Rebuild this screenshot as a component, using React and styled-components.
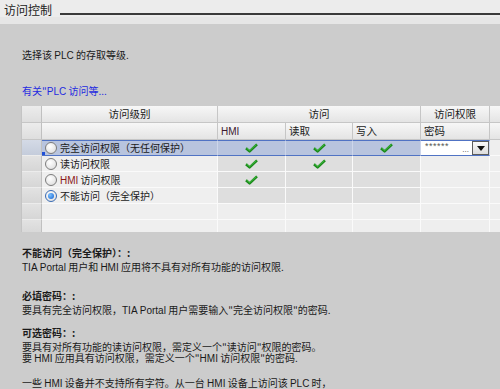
import * as React from 'react'
import styled, {createGlobalStyle, css} from 'styled-components'

const GlobalStyle = createGlobalStyle`
    body {
        margin: 0;
        background: #cccccc;
        font-family: "Noto Sans CJK SC", "Liberation Sans", sans-serif;
        font-size: 10px;
        color: #1a1a1a;
    }
`

const Page = styled.div`
    width: 500px;
    height: 389px;
    overflow: hidden;
    background: #cccccc;
`

const TitleBar = styled.div`
    display: flex;
    align-items: flex-end;
    height: 17px;
    padding-left: 4px;
    background: #ececec;
`

const Title = styled.div`
    font-size: 12px;
    line-height: 14px;
    color: #222;
`

const Rule = styled.div`
    flex: 1;
    align-self: flex-end;
    height: 2px;
    margin: 0 0 2px 8px;
    background: #3a3a3a;
`

const Strip = styled.div`
    height: 7px;
    background: #e6e6e6;
`

const Body = styled.div`
    padding-left: 21px;
`

const Line = styled.div`
    line-height: 14px;
    height: 14px;
    white-space: nowrap;
    margin-top: ${(p) => p.$top || 0}px;
    font-weight: ${(p) => (p.$bold ? 700 : 400)};
    color: ${(p) => (p.$link ? '#1f2be0' : '#1a1a1a')};
    padding-left: 1px;
`

const Lat = styled.span`
    font-family: "Liberation Sans", sans-serif;
    font-size: 10px;
    line-height: 1;
    color: ${(p) => p.$color || 'inherit'};
`

const TableWrap = styled.div`
    margin-top: 8px;
    height: 126px;
    overflow: hidden;
    border-left: 1px solid #c4c4c4;
`

const cols = '20px 176px 68px 67px 68px 69px 11px'

const Row = styled.div`
    display: grid;
    grid-template-columns: ${cols};
    height: ${(p) => p.$h || 16}px;
`

const Head = styled.div`
    box-sizing: border-box;
    border-right: 1px solid #c6c6c6;
    border-bottom: 1px solid #c6c6c6;
    background: linear-gradient(#f7f7f7, #e4e4e4);
    font-size: 10.5px;
    line-height: 16px;
    white-space: nowrap;
    overflow: hidden;
    grid-column: span ${(p) => p.$span || 1};
    text-align: ${(p) => (p.$center ? 'center' : 'left')};
    padding-left: ${(p) => (p.$center ? 0 : 3)}px;
`

const Selector = styled.div`
    box-sizing: border-box;
    border-right: 1px solid #c0c0c0;
    border-bottom: 1px solid ${(p) => (p.$head ? '#c6c6c6' : '#ececec')};
    background: ${(p) =>
        p.$head
            ? 'linear-gradient(#ececec, #dedede)'
            : p.$active
            ? 'linear-gradient(#d4dae6, #c4ccdb)'
            : 'linear-gradient(#e2e2e2, #d6d6d6)'};
`

const Cell = styled.div`
    box-sizing: border-box;
    display: flex;
    align-items: center;
    justify-content: ${(p) => (p.$center ? 'center' : 'flex-start')};
    border-right: 1px solid #fafafa;
    border-bottom: 1px solid #fafafa;
    background: ${(p) => p.$bg || '#eeeeee'};
    white-space: nowrap;
    overflow: hidden;
    ${(p) =>
        p.$active &&
        css`
            background: #b8c4de;
            border-top: 1px solid #5073c4;
            border-bottom: 1px solid #5073c4;
            border-right-color: #cdd6ea;
        `}
`

const LevelCell = styled(Cell)`
    gap: 3px;
    padding-left: 3px;
    position: relative;
    line-height: 14px;
`

const FocusMark = styled.span`
    position: absolute;
    left: 0;
    bottom: 0;
    width: 3px;
    height: 3px;
    background: #2050d8;
`

const Radio = styled.span`
    box-sizing: border-box;
    width: 12px;
    height: 12px;
    border-radius: 50%;
    flex-shrink: 0;
    border: 1px solid ${(p) => (p.$on ? '#3a6cb4' : '#7c7c7c')};
    background: radial-gradient(circle at 40% 35%, #ffffff, #d8d8d8);
    display: flex;
    align-items: center;
    justify-content: center;

    &::after {
        content: '';
        display: ${(p) => (p.$on ? 'block' : 'none')};
        width: 6px;
        height: 6px;
        border-radius: 50%;
        background: radial-gradient(circle at 35% 35%, #7cc0ff, #1060d0);
    }
`

const Password = styled.div`
    flex: 1;
    display: flex;
    height: 100%;
    background: #ffffff;
    position: relative;
`

const Stars = styled.span`
    font-family: "Liberation Sans", sans-serif;
    font-size: 9px;
    letter-spacing: 0.5px;
    line-height: 10px;
    color: #555;
    padding-left: 4px;
`

const Dots = styled.span`
    position: absolute;
    right: 20px;
    bottom: 1px;
    font-family: "Liberation Sans", sans-serif;
    font-size: 8px;
    line-height: 8px;
    color: #444;
`

const DropButton = styled.div`
    box-sizing: border-box;
    margin-left: auto;
    width: 17px;
    height: 100%;
    border: 1px solid #5c5c5c;
    background: linear-gradient(#fafafa, #dcdcdc);
    display: flex;
    align-items: center;
    justify-content: center;

    &::after {
        content: '';
        border-left: 4px solid transparent;
        border-right: 4px solid transparent;
        border-top: 5px solid #111;
    }
`

const Check = () => (
    <svg width="13" height="10" viewBox="0 0 13 10">
        <path d="M1 5.2 L4.6 8.4 L12 1.4" fill="none" stroke="#1a8a1a" strokeWidth="2.6" strokeLinejoin="round" />
        <path d="M1.6 5 L4.6 7.6 L11.4 1.4" fill="none" stroke="#46c046" strokeWidth="1" />
    </svg>
)

const levels = [
    {label: '完全访问权限（无任何保护）', checks: [true, true, true], active: true},
    {label: '读访问权限', checks: [true, true, false]},
    {label: [<Lat key="h" $color="#8a1818">HMI</Lat>, ' 访问权限'], checks: [true, false, false]},
    {label: '不能访问（完全保护）', checks: [false, false, false], selected: true},
]

const AccessTable = () => (
    <TableWrap>
        <Row $h={17}>
            <Selector $head />
            <Head $center>访问级别</Head>
            <Head $center $span={3}>访问</Head>
            <Head $center>访问权限</Head>
            <Head />
        </Row>
        <Row $h={17}>
            <Selector $head />
            <Head />
            <Head><Lat $color="#3c1830">HMI</Lat></Head>
            <Head>读取</Head>
            <Head>写入</Head>
            <Head>密码</Head>
            <Head />
        </Row>
        {levels.map((lv, i) => (
            <Row key={i}>
                <Selector $active={lv.active} />
                <LevelCell $bg="#efefef" $active={lv.active}>
                    <Radio $on={lv.selected} />
                    <span>{lv.label}</span>
                    {lv.active && <FocusMark />}
                </LevelCell>
                {lv.checks.map((c, j) => (
                    <Cell key={j} $center $bg="#dedede" $active={lv.active}>
                        {c && <Check />}
                    </Cell>
                ))}
                {lv.active ? (
                    <Cell $active>
                        <Password>
                            <Stars>******</Stars>
                            <Dots>...</Dots>
                            <DropButton />
                        </Password>
                    </Cell>
                ) : (
                    <Cell />
                )}
                <Cell />
            </Row>
        ))}
        {[0, 1].map((i) => (
            <Row key={'e' + i}>
                <Selector />
                <Cell $bg="#efefef" />
                <Cell />
                <Cell />
                <Cell />
                <Cell />
                <Cell />
            </Row>
        ))}
    </TableWrap>
)

const App = () => (
    <Page>
        <GlobalStyle />
        <TitleBar>
            <Title>访问控制</Title>
            <Rule />
        </TitleBar>
        <Strip />
        <Body>
            <Line $top={24}>选择该 <Lat>PLC</Lat> 的存取等级.</Line>
            <Line $top={22} $link>有关"<Lat>PLC</Lat> 访问等...</Line>
            <AccessTable />
            <Line $top={14} $bold>不能访问（完全保护）：:</Line>
            <Line><Lat>TIA Portal</Lat> 用户和 <Lat>HMI</Lat> 应用将不具有对所有功能的访问权限.</Line>
            <Line $top={15} $bold>必填密码：:</Line>
            <Line>要具有完全访问权限，<Lat>TIA Portal</Lat> 用户需要输入"完全访问权限"的密码.</Line>
            <Line $top={9} $bold>可选密码：:</Line>
            <Line>要具有对所有功能的读访问权限，需定义一个"读访问"权限的密码。</Line>
            <Line $top={-3}>要 <Lat>HMI</Lat> 应用具有访问权限，需定义一个"<Lat>HMI</Lat> 访问权限"的密码.</Line>
            <Line $top={11}>一些 <Lat>HMI</Lat> 设备并不支持所有字符。从一台 <Lat>HMI</Lat> 设备上访问该 <Lat>PLC</Lat> 时，</Line>
        </Body>
    </Page>
)

export default App
